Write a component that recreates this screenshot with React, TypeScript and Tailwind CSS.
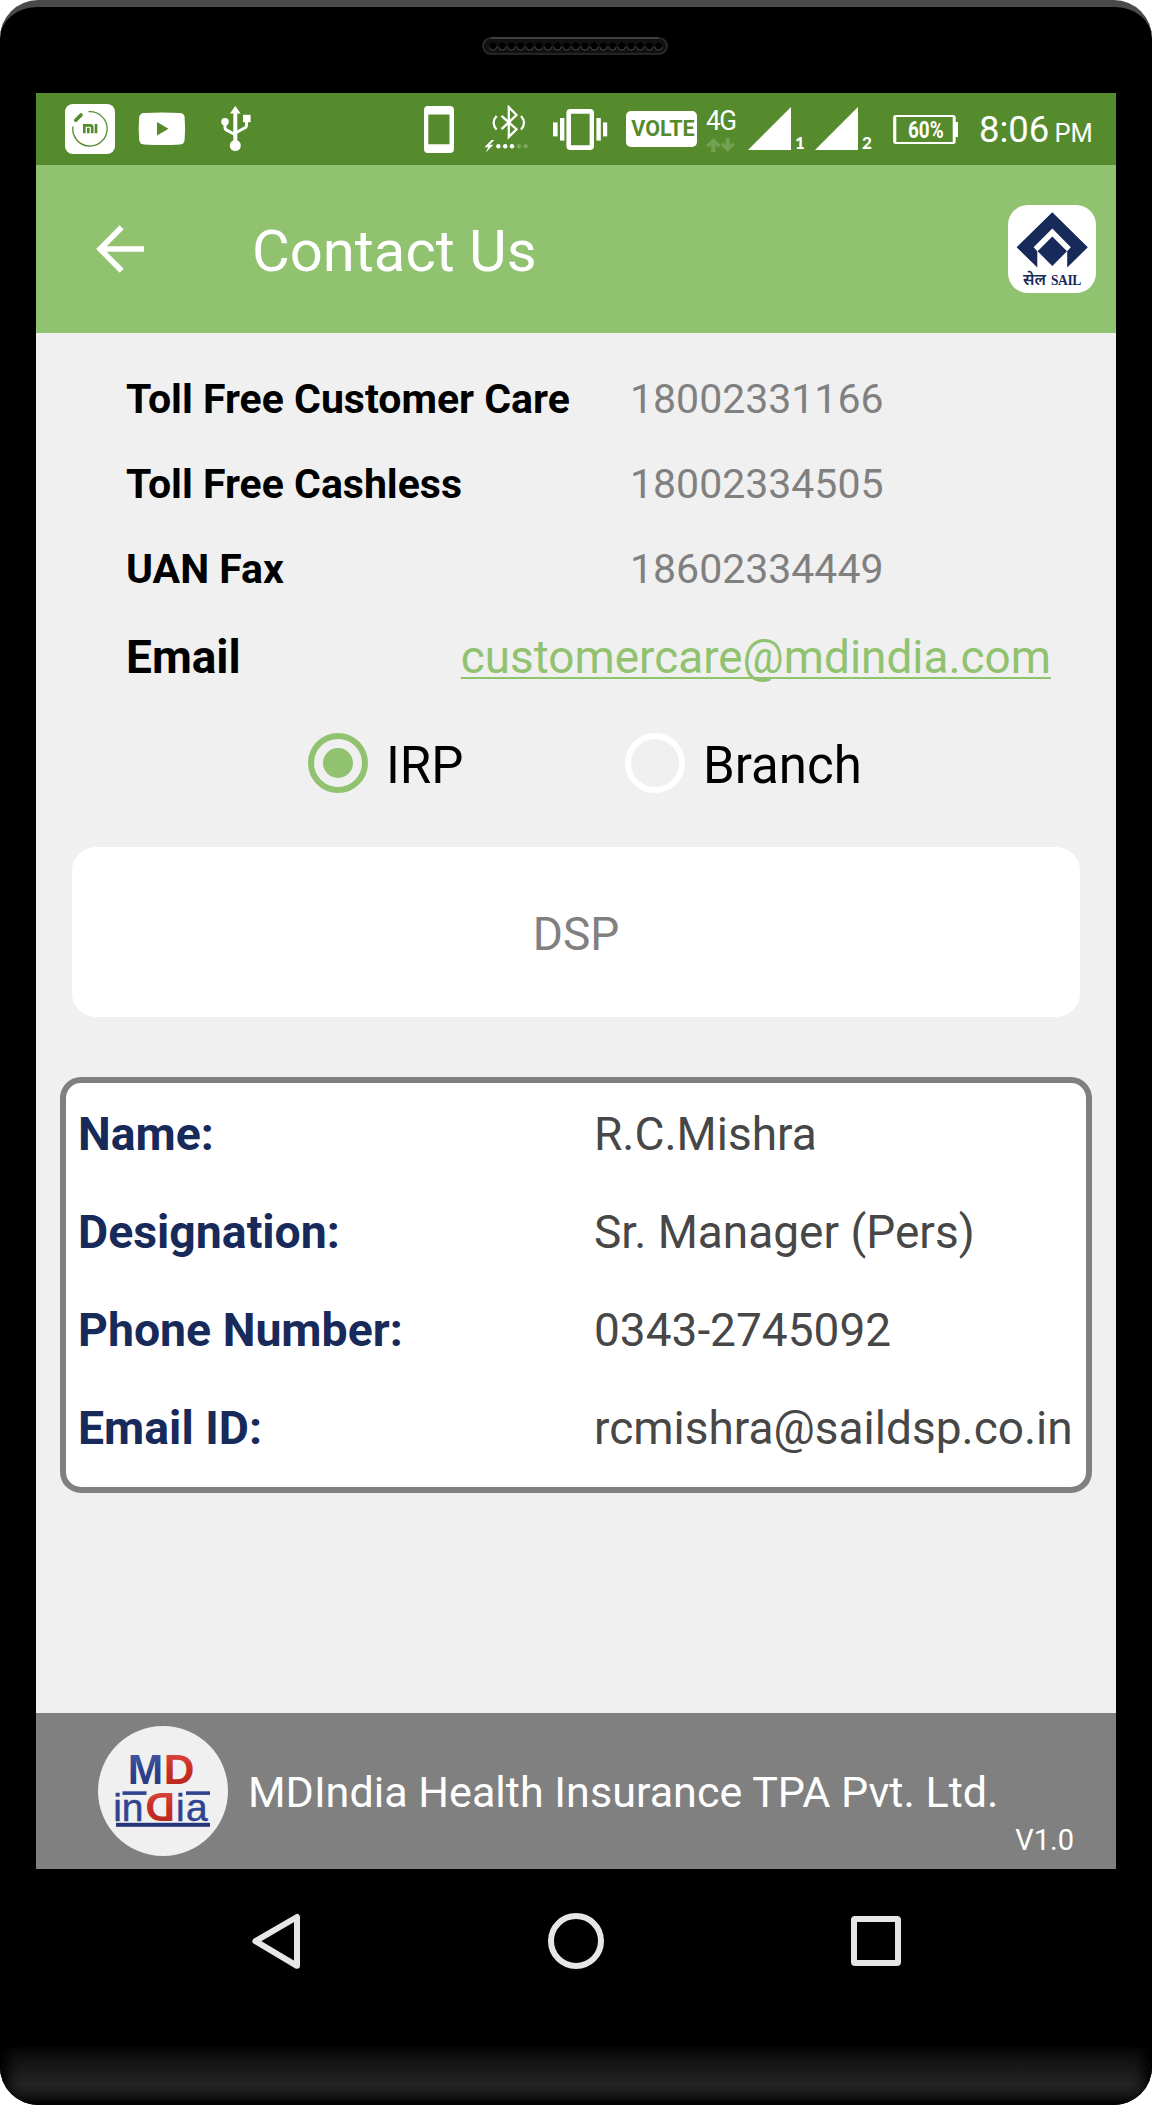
import type { ReactNode } from "react";

const supportLines = [
  { label: "Toll Free Customer Care", value: "18002331166" },
  { label: "Toll Free Cashless", value: "18002334505" },
  { label: "UAN Fax", value: "18602334449" },
];

const contactFields = [
  { label: "Name:", value: "R.C.Mishra" },
  { label: "Designation:", value: "Sr. Manager (Pers)" },
  { label: "Phone Number:", value: "0343-2745092" },
  { label: "Email ID:", value: "rcmishra@saildsp.co.in" },
];

const speakerHoles = Array.from({ length: 19 }, (_, i) => 11 + i * 9.2);

function Speaker() {
  return (
    <svg className="h-[18px] w-[186px]" viewBox="0 0 186 18" fill="none">
      <rect x="1" y="1" width="184" height="16" rx="8" fill="#111" stroke="#2e2e2e" strokeWidth="1.6" />
      <path d="M9 1H177" stroke="#4a4a4a" strokeWidth="1.4" />
      {speakerHoles.map((x) => (
        <g key={x}>
          <circle cx={x} cy="9" r="3.6" fill="#000" />
          <path d={`M${x - 3.6} 9.6a3.6 3.6 0 0 0 7.2 0`} stroke="#474747" strokeWidth="1" />
        </g>
      ))}
    </svg>
  );
}

function MiFitIcon() {
  return (
    <svg className="h-[50px] w-[50px]" viewBox="0 0 50 50" fill="none">
      <rect width="50" height="50" rx="8" fill="#fff" />
      <path d="M23.5 7.7A17.2 17.2 0 1 1 7.9 22.5" stroke="#558b2d" strokeWidth="1.3" />
      <path d="M10.7 16.2L16 10.9" stroke="#558b2d" strokeWidth="3.6" strokeLinecap="round" />
      <path d="M19.3 29.2V21.3H25Q27.2 21.3 27.2 23.4V29.2M23.3 23.8V29.2M31 20V29.2" stroke="#558b2d" strokeWidth="2.7" />
    </svg>
  );
}

function YoutubeIcon() {
  return (
    <svg className="h-[34px] w-[48px]" viewBox="0 0 48 34">
      <path d="M6 1Q24 0 42 1Q46 1.3 46.6 5Q47.6 17 46.6 28Q46 32 42 32.5Q24 33.5 6 32.5Q1.8 32 1.2 28Q0.2 17 1.2 5Q2 1.3 6 1Z" fill="#fff" />
      <path d="M19 10L30.5 16.8L19 23.6Z" fill="#558b2d" />
    </svg>
  );
}

function UsbIcon() {
  return (
    <svg className="h-[46px] w-[30px]" viewBox="0 0 30 46" fill="none">
      <circle cx="14.3" cy="39.5" r="5.5" fill="#fff" />
      <path d="M14.3 0L19.6 7.6H9Z" fill="#fff" />
      <path d="M14.3 6V38" stroke="#fff" strokeWidth="4" />
      <path d="M4 17V21.8Q4 23.4 5.6 24.2L14.3 28.6M25.5 14V19.6Q25.5 21 24 21.8L14.3 27" stroke="#fff" strokeWidth="3" />
      <circle cx="4" cy="15.8" r="3.8" fill="#fff" />
      <rect x="22" y="8.8" width="7.6" height="7.4" fill="#fff" />
    </svg>
  );
}

function DeviceIcon() {
  return (
    <svg className="h-[47px] w-[30px]" viewBox="0 0 30 47">
      <path fillRule="evenodd" d="M4 0H26Q30 0 30 4V43Q30 47 26 47H4Q0 47 0 43V4Q0 0 4 0ZM4.3 8.6V38.2H25.5V8.6Z" fill="#fff" />
    </svg>
  );
}

function BluetoothChargeIcon() {
  return (
    <svg className="h-[48px] w-[44px]" viewBox="0 0 44 48" fill="none" stroke="#fff">
      <path d="M17.5 10.8L32.5 24.2L24.8 32V2.2L32.5 10L17.5 24.2" strokeWidth="2.3" />
      <path d="M12.6 11Q6.6 17.7 12.6 24.6M37 11Q43 17.7 37 24.6" strokeWidth="2.2" />
      <path d="M7.5 35L0.4 42.3H4.2L1.8 47.6L9.4 39.8H5.6L10.4 35Z" fill="#fff" stroke="none" />
      <g fill="#fff" stroke="none">
        <circle cx="14.4" cy="41.2" r="2.2" />
        <circle cx="21.2" cy="41.2" r="2.2" />
        <circle cx="28" cy="41.2" r="2.2" />
      </g>
      <g fill="#7da55c" stroke="none">
        <circle cx="35" cy="41.2" r="2.2" />
        <circle cx="41.6" cy="41.2" r="2.2" />
      </g>
    </svg>
  );
}

function VibrateIcon() {
  return (
    <svg className="h-[41px] w-[55px]" viewBox="0 0 55 41" fill="#fff">
      <rect x="0" y="13.4" width="4.6" height="14" />
      <rect x="7" y="9" width="4.4" height="22.6" />
      <rect x="43.4" y="9" width="4.4" height="22.6" />
      <rect x="50" y="13.4" width="4.2" height="14" />
      <path fillRule="evenodd" d="M17.4 0H37Q41 0 41 4V37Q41 41 37 41H17.4Q13.4 41 13.4 37V4Q13.4 0 17.4 0ZM18 4.8V36.2H36.6V4.8Z" />
    </svg>
  );
}

function DataArrows() {
  return (
    <svg className="h-[14px] w-[29px]" viewBox="0 0 29 14" fill="#74a052">
      <path d="M7.3 0L14.4 7L12 9.4L9.4 7V14H5.2V7L2.6 9.4L0.2 7Z" />
      <path d="M21.7 14L28.8 7L26.4 4.6L23.8 7V0H19.6V7L17 4.6L14.6 7Z" />
    </svg>
  );
}

function Signal({ sim }: { sim: string }) {
  return (
    <div className="flex items-end">
      <svg className="h-[43px] w-[43px]" viewBox="0 0 43 43">
        <path d="M43 0V43H0Z" fill="#fff" />
      </svg>
      <span className="ml-[4px] w-[10px] font-['Lato'] text-[17px] leading-[15px] font-black text-white">{sim}</span>
    </div>
  );
}

function Battery() {
  return (
    <div className="relative ml-[21px] flex h-[29px] w-[65px] items-center">
      <svg className="absolute inset-0 h-[29px] w-[65px]" viewBox="0 0 65 29" fill="none">
        <rect x="1.2" y="1" width="60.4" height="27" rx="1.5" stroke="#fff" strokeWidth="2" />
        <path d="M2 2V27M61 2V27" stroke="#fff" strokeWidth="2.6" />
        <rect x="61" y="7" width="4" height="15" fill="#fff" />
      </svg>
      <span className="relative mt-[2px] ml-[15px] w-[42px] origin-left scale-x-[0.82] text-[23px] leading-[29px] font-bold text-white">60%</span>
    </div>
  );
}

function StatusBar() {
  return (
    <div className="flex h-[72px] shrink-0 items-center bg-[#558b2d] text-white">
      <div className="ml-[29px] flex items-center">
        <MiFitIcon />
        <div className="ml-[23px]">
          <YoutubeIcon />
        </div>
        <div className="ml-[35px]">
          <UsbIcon />
        </div>
      </div>
      <div className="ml-[173px] flex items-center">
        <div className="mt-px">
          <DeviceIcon />
        </div>
        <div className="ml-[30px] mb-px">
          <BluetoothChargeIcon />
        </div>
        <div className="ml-[25px]">
          <VibrateIcon />
        </div>
        <div className="ml-[18px] flex h-[36px] w-[71px] items-center justify-center rounded-[5px] bg-white pl-[3px]">
          <span className="scale-y-[1.05] text-[21.5px] leading-none font-bold text-[#558b2d]">VOLTE</span>
        </div>
        <div className="ml-[9px] flex h-[50px] w-[31px] flex-col pt-[7px]">
          <span className="origin-left scale-x-[0.93] text-[28px] leading-[20px] tracking-[-1.5px]">4G</span>
          <div className="mt-[7px]">
            <DataArrows />
          </div>
        </div>
      </div>
      <div className="ml-[11px] mt-[-1px] flex items-center gap-[10px]">
        <Signal sim="1" />
        <Signal sim="2" />
      </div>
      <Battery />
      <div className="mt-[5px] ml-[21px] flex items-baseline whitespace-nowrap">
        <span className="text-[36.5px] leading-[44px]">8:06</span>
        <span className="ml-[5px] text-[25.5px] leading-[44px]">PM</span>
      </div>
    </div>
  );
}

function SailLogo() {
  return (
    <div className="flex h-[88px] w-[88px] flex-col items-center overflow-hidden rounded-[20px] bg-white">
      <svg className="h-[64px] w-[88px] shrink-0" viewBox="0 0 88 64" fill="#172a5a">
        <path d="M44.3 7.3L79.8 42.3L59.2 62.6V46.2L62.8 42.3L44.3 23.4L25.6 42.3L29.3 46.2V62.6L8.6 42.3Z" />
        <path d="M44.3 31.4L59 46.2L44.3 61L29.6 46.2Z" />
      </svg>
      <div className="mt-[-1px] flex items-baseline gap-[5px] whitespace-nowrap text-[#172a5a]">
        <span className="font-['Noto_Sans'] text-[16px] leading-[22px] font-semibold">सेल</span>
        <span className="scale-y-110 font-['Liberation_Serif'] text-[13.5px] leading-[22px] font-bold tracking-[-0.4px]">SAIL</span>
      </div>
    </div>
  );
}

function AppBar() {
  return (
    <div className="flex h-[168px] shrink-0 items-center bg-[#91c270]">
      <svg className="ml-[60px] h-[48px] w-[48px]" viewBox="0 0 48 48" fill="none" stroke="#fff" strokeWidth="5.6">
        <path d="M48 24H4M25.7 2.2L4 24L25.7 45.8" />
      </svg>
      <h1 className="mt-[3px] ml-[108px] text-[58px] leading-[68px] font-normal text-white">Contact Us</h1>
      <div className="mr-[20px] ml-auto">
        <SailLogo />
      </div>
    </div>
  );
}

function Radio({ checked, children }: { checked?: boolean; children: ReactNode }) {
  return (
    <label className="flex items-center">
      <span
        className={
          checked
            ? "flex h-[60px] w-[60px] items-center justify-center rounded-full border-[6px] border-[#91c270]"
            : "flex h-[60px] w-[60px] items-center justify-center rounded-full border-[6px] border-white"
        }
      >
        {checked && <span className="h-[30px] w-[30px] rounded-full bg-[#91c270]" />}
      </span>
      <span className="mt-[5px] ml-[18px] text-[51px] leading-[60px] text-black">{children}</span>
    </label>
  );
}

function MdIndiaLogo() {
  return (
    <svg className="h-[130px] w-[130px]" viewBox="0 0 130 130">
      <defs>
        <linearGradient id="blue" x1="0" y1="0" x2="0" y2="1">
          <stop offset="0" stopColor="#4a5fa8" />
          <stop offset="0.5" stopColor="#2f4390" />
          <stop offset="1" stopColor="#26357a" />
        </linearGradient>
        <linearGradient id="red" x1="0" y1="0" x2="0" y2="1">
          <stop offset="0" stopColor="#e05248" />
          <stop offset="0.5" stopColor="#c92d24" />
          <stop offset="1" stopColor="#b3251e" />
        </linearGradient>
      </defs>
      <circle cx="65" cy="65" r="65" fill="#f0f0f0" />
      <g fontFamily="Liberation Sans" fontWeight="bold" fontSize="42.5">
        <text x="29.8" y="58" fill="url(#blue)">M</text>
        <text x="65.8" y="58" fill="url(#red)">D</text>
        <text transform="translate(77 95) scale(-1 1)" x="0" y="0" fontSize="41" fill="url(#red)">D</text>
      </g>
      <g fontFamily="Liberation Sans" fontSize="39" fill="#2f4390" stroke="#2f4390" strokeWidth="0.5">
        <text x="15.2" y="94.6">in</text>
        <text x="78" y="94.6" letterSpacing="1.4">ia</text>
      </g>
      <rect x="24.5" y="65.3" width="24" height="3.6" fill="#2f4390" />
      <rect x="88" y="65.3" width="24" height="3.6" fill="#2f4390" />
      <rect x="18" y="96.8" width="94" height="4" fill="#26357a" />
    </svg>
  );
}

function Footer() {
  return (
    <div className="relative flex h-[156px] shrink-0 items-center bg-[#808080] text-white">
      <div className="ml-[62px]">
        <MdIndiaLogo />
      </div>
      <span className="mt-[4px] ml-[20px] text-[43.1px] leading-[50px] whitespace-nowrap">
        MDIndia Health Insurance TPA Pvt. Ltd.
      </span>
      <span className="absolute right-[42px] bottom-[11px] text-[29px] leading-[36px]">V1.0</span>
    </div>
  );
}

function NavigationBar() {
  return (
    <div className="flex h-[178px] items-start pt-[44px]">
      <svg className="ml-[252px] h-[56px] w-[49px]" viewBox="0 0 49 56" fill="none" stroke="#e6e6e6" strokeWidth="6" strokeLinejoin="round">
        <path d="M3.4 28.2L45 4V52.8Z" />
      </svg>
      <div className="ml-[247px] h-[56px] w-[56px] rounded-full border-[6px] border-[#e6e6e6]" />
      <div className="mt-[3px] ml-[247px] h-[50px] w-[50px] rounded-[4px] border-[6px] border-[#e6e6e6]" />
    </div>
  );
}

export default function App() {
  return (
    <div className="w-[1152px] bg-white">
      <div className="flex h-[2105px] w-[1152px] flex-col overflow-hidden rounded-[38px] border-t-[7px] border-[#4a4a4a] bg-black font-['Roboto',sans-serif]">
        <div className="flex h-[86px] shrink-0 items-start justify-center pt-[30px] pr-[2px]">
          <Speaker />
        </div>
        <div className="mx-[36px] flex h-[1776px] shrink-0 flex-col bg-[#f0f0f0]">
          <StatusBar />
          <AppBar />
          <main className="flex flex-1 flex-col pt-[23px]">
            {supportLines.map((line) => (
              <div key={line.label} className="flex h-[85px] items-center pl-[90px] text-[41px] leading-[48px]">
                <span className="w-[504px] font-bold text-black">{line.label}</span>
                <span className="text-[#808080]">{line.value}</span>
              </div>
            ))}
            <div className="flex h-[92px] items-center pr-[65px] pl-[90px] text-[46px] leading-[54px]">
              <span className="font-bold text-black">Email</span>
              <a className="ml-auto text-[45.9px] text-[#91c270] underline decoration-[2px] underline-offset-[4px] [text-decoration-skip-ink:none]">
                customercare@mdindia.com
              </a>
            </div>
            <div className="flex h-[120px] items-center pl-[272px]">
              <div className="w-[317px]">
                <Radio checked>IRP</Radio>
              </div>
              <Radio>Branch</Radio>
            </div>
            <div className="mx-[36px] mt-[24px] flex h-[170px] items-center justify-center rounded-[24px] bg-white pt-[4px] text-[46px] leading-[54px] text-[#808080]">
              DSP
            </div>
            <div className="mx-[24px] mt-[60px] h-[416px] rounded-[21px] border-[6px] border-[#808080] bg-white pt-[2px]">
              {contactFields.map((field) => (
                <div key={field.label} className="flex h-[98px] items-center pl-[12px] text-[46px] leading-[54px] whitespace-nowrap">
                  <span className="w-[516px] text-[46.4px] font-bold text-[#172a5a]">{field.label}</span>
                  <span className="text-[#474747]">{field.value}</span>
                </div>
              ))}
            </div>
          </main>
          <Footer />
        </div>
        <NavigationBar />
        <div className="flex-1 bg-gradient-to-b from-[#0a0a0a] via-[#242424] via-65% to-[#0d0d0d] shadow-[inset_12px_0_14px_-4px_#000,inset_-12px_0_14px_-4px_#000,inset_0_-6px_8px_-4px_#000]" />
      </div>
    </div>
  );
}
